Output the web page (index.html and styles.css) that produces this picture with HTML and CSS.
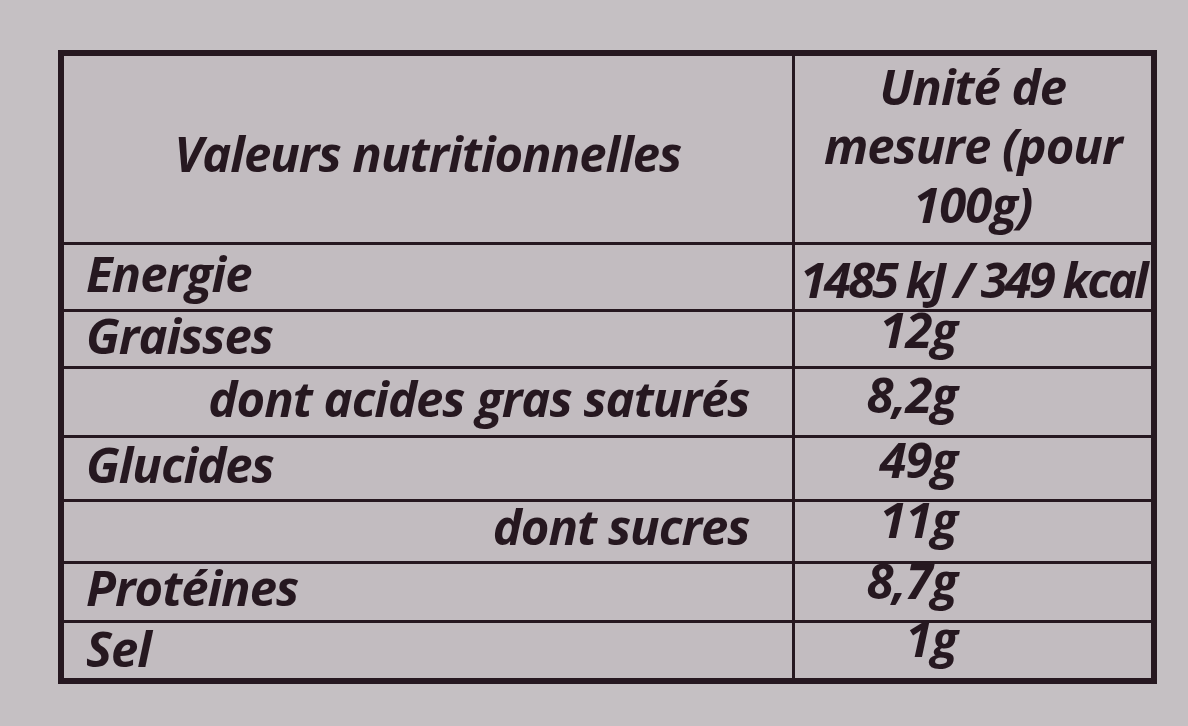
FILE: index.html
```html
<!DOCTYPE html>
<html lang="fr">
<head>
<meta charset="utf-8">
<title>Valeurs nutritionnelles</title>
<link rel="stylesheet" href="styles.css">
</head>
<body>
<main class="sheet">
  <table class="nutri">
    <colgroup>
      <col class="col-name">
      <col class="col-value">
    </colgroup>
    <tr class="row-head">
      <th class="cell head-name">Valeurs nutritionnelles</th>
      <th class="cell head-unit">Unité de<br>mesure (pour<br>100g)</th>
    </tr>
    <tr class="row-energy">
      <td class="cell name">Energie</td>
      <td class="cell value value-energy">1485 kJ / 349 kcal</td>
    </tr>
    <tr class="row-fat">
      <td class="cell name">Graisses</td>
      <td class="cell value">12g</td>
    </tr>
    <tr class="row-sat">
      <td class="cell name sub">dont acides gras saturés</td>
      <td class="cell value">8,2g</td>
    </tr>
    <tr class="row-carb">
      <td class="cell name">Glucides</td>
      <td class="cell value">49g</td>
    </tr>
    <tr class="row-sugar">
      <td class="cell name sub">dont sucres</td>
      <td class="cell value">11g</td>
    </tr>
    <tr class="row-prot">
      <td class="cell name">Protéines</td>
      <td class="cell value">8,7g</td>
    </tr>
    <tr class="row-salt">
      <td class="cell name">Sel</td>
      <td class="cell value">1g</td>
    </tr>
  </table>
</main>
</body>
</html>
```
FILE: styles.css
```css
html, body {
  margin: 0;
  padding: 0;
}
body {
  background: #c5c0c3;
  width: 1188px;
  height: 726px;
  overflow: hidden;
  font-family: "Open Sans", "Lato", sans-serif;
  color: #261820;
}
.sheet {
  padding: 50px 0 0 58px;
}
.nutri {
  border-collapse: collapse;
  border: 6px solid #261820;
  width: 1093px;
  table-layout: fixed;
  background: #c2bcc0;
}
.col-name { width: 732px; }
.col-value { width: 361px; }
.cell {
  border: 3px solid #261820;
  padding: 0;
  font-weight: 700;
  font-style: italic;
  font-size: 49px;
  line-height: 30px;
  white-space: nowrap;
  letter-spacing: -1px;
}
.row-head { height: 190px; }
.row-energy { height: 67px; }
.row-fat { height: 57px; }
.row-sat { height: 69px; }
.row-carb { height: 64px; }
.row-sugar { height: 62px; }
.row-prot { height: 59px; }
.row-salt { height: 59px; }

.cell.head-name {
  text-align: center;
  vertical-align: middle;
  padding-top: 8px;
}
.cell.head-unit {
  text-align: center;
  vertical-align: middle;
  line-height: 59px;
  padding: 0 0 6px 0;
}
.cell.name {
  text-align: left;
  vertical-align: bottom;
  padding: 0 0 16px 22px;
}
.cell.name.sub {
  text-align: right;
  padding-right: 42px;
}
.cell.value {
  text-align: right;
  vertical-align: bottom;
  padding: 0 194px 22px 0;
}
.cell.value.value-energy {
  text-align: center;
  padding: 0 0 15px 0;
  letter-spacing: -3px;
}

.row-energy .cell.name { padding-bottom: 21px; }
.row-sat .cell.name { padding-bottom: 22px; }
.row-sat .cell.value { padding-bottom: 26px; }
.row-carb .cell.name { padding-bottom: 20px; }
.row-carb .cell.value { padding-bottom: 25px; }
.row-sugar .cell.name { padding-bottom: 20px; }
.row-sugar .cell.value { padding-bottom: 27px; }
.row-prot .cell.name { padding-bottom: 18px; }
.row-prot .cell.value { padding-bottom: 25px; }
.row-salt .cell.name { padding-bottom: 15px; }
.row-salt .cell.value { padding-bottom: 25px; }
```
